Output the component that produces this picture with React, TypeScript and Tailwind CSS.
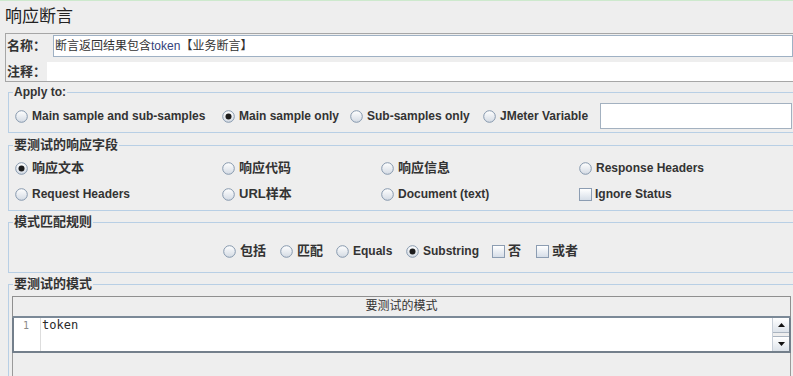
import React from 'react';

function Radio({ on }: { on?: boolean }) {
    return (
        <svg width="13" height="13" viewBox="0 0 13 13" className="shrink-0">
            <defs>
                <linearGradient id="radioFill" x1="0" y1="0" x2="0" y2="1">
                    <stop offset="0" stopColor="#ffffff" />
                    <stop offset="1" stopColor="#d3dae3" />
                </linearGradient>
            </defs>
            <circle cx="6.5" cy="6.5" r="5.8" fill="url(#radioFill)" stroke="#8598ad" strokeWidth="1" />
            {on && <circle cx="6.5" cy="6.5" r="3" fill="#1c1c1c" />}
        </svg>
    );
}

function Check() {
    return <span className="w-[13px] h-[13px] shrink-0 border border-[#8c9db2] bg-linear-to-b from-white to-[#d6dee8]" />;
}

function Option({ on, label, cjk, width }: { on?: boolean; label: string; cjk?: boolean; width?: string }) {
    return (
        <div className={`flex items-center gap-[4px] shrink-0 ${width ?? ''}`}>
            <Radio on={on} />
            <span className={cjk ? 'text-[13px] font-bold' : 'font-bold'}>{label}</span>
        </div>
    );
}

function Box({ label, cjk, width }: { label: string; cjk?: boolean; width?: string }) {
    return (
        <div className={`flex items-center gap-[3px] shrink-0 ${width ?? ''}`}>
            <Check />
            <span className={cjk ? 'text-[13px] font-bold' : 'font-bold'}>{label}</span>
        </div>
    );
}

export default function App() {
    const fieldset = "ml-[8px] border border-r-0 border-[#b8cfe5] min-w-0";
    const legend = "ml-[4px] px-[1px] leading-[14px] font-bold";

    return (
        <div className="w-[793px] h-[376px] overflow-hidden bg-[#eeeeee] border-t border-[#cde9cd] font-['Liberation_Sans','Noto_Sans_CJK_SC',sans-serif] text-[12px] text-[#333333]">
            <div className="h-[32px] flex items-center pl-[5px] text-[17px] text-[#222]">响应断言</div>

            {/* name / comment */}
            <div className="ml-[5px] border-t border-l border-b border-[#a6a6a6]">
                <div className="flex h-[23px] pt-[1px]">
                    <div className="w-[47px] pl-[1px] text-[13px] font-bold leading-[22px]">名称：</div>
                    <div className="flex-1 h-[22px] border border-[#9fb1c4] bg-white pl-[1px] leading-[20px] whitespace-nowrap">
                        断言返回结果包含<span className="text-[#34427a]">token</span>【业务断言】
                    </div>
                </div>
                <div className="h-[5px]" />
                <div className="flex h-[19px]">
                    <div className="w-[41px] pl-[1px] text-[13px] font-bold leading-[19px]">注释：</div>
                    <div className="flex-1 bg-white" />
                </div>
            </div>

            {/* Apply to */}
            <fieldset className={`mt-[3px] ${fieldset}`}>
                <legend className={legend}>Apply to:</legend>
                <div className="flex items-center h-[26px] mt-[4px] mb-[3px] pl-[6px]">
                    <Option label="Main sample and sub-samples" width="w-[207px]" />
                    <Option on label="Main sample only" width="w-[128px]" />
                    <Option label="Sub-samples only" width="w-[133px]" />
                    <Option label="JMeter Variable" width="w-[117px]" />
                    <div className="flex-1 h-[26px] mr-[1px] border border-[#a3b1c0] bg-white" />
                </div>
            </fieldset>

            {/* response field */}
            <fieldset className={`mt-[5px] ${fieldset}`}>
                <legend className={`${legend} text-[13px]`}>要测试的响应字段</legend>
                <div className="mt-[3px] mb-[3px] pl-[6px]">
                    <div className="flex items-center h-[26px]">
                        <Option on cjk label="响应文本" width="w-[207px]" />
                        <Option cjk label="响应代码" width="w-[159px]" />
                        <Option cjk label="响应信息" width="w-[198px]" />
                        <Option label="Response Headers" />
                    </div>
                    <div className="flex items-center h-[26px]">
                        <Option label="Request Headers" width="w-[207px]" />
                        <Option cjk label="URL样本" width="w-[159px]" />
                        <Option label="Document (text)" width="w-[198px]" />
                        <Box label="Ignore Status" />
                    </div>
                </div>
            </fieldset>

            {/* pattern matching rules */}
            <fieldset className={`mt-[4px] ${fieldset}`}>
                <legend className={`${legend} text-[13px]`}>模式匹配规则</legend>
                <div className="flex items-center h-[26px] mt-[9px] mb-[8px] pl-[214px]">
                    <Option cjk label="包括" width="w-[57px]" />
                    <Option cjk label="匹配" width="w-[56px]" />
                    <Option label="Equals" width="w-[70px]" />
                    <Option on label="Substring" width="w-[86px]" />
                    <Box cjk label="否" width="w-[44px]" />
                    <Box cjk label="或者" />
                </div>
            </fieldset>

            {/* patterns to test */}
            <fieldset className={`mt-[4px] ${fieldset}`}>
                <legend className={`${legend} text-[13px]`}>要测试的模式</legend>
                <div className="pt-[5px] pl-[3px] pr-[2px]">
                    <div className="h-[22px] border-t border-x border-[#8f8f8f] border-b-2 border-b-[#7b8997] text-center leading-[19px]">
                        要测试的模式
                    </div>
                    <div className="flex h-[35px] border-2 border-t-0 border-[#737f8b] bg-white">
                        <div className="w-[27px] pl-[9px] pt-[1px] border-r border-[#dddddd] font-['DejaVu_Sans_Mono',monospace] text-[10px] text-[#8a8a8a] leading-[14px]">1</div>
                        <div className="flex-1 pl-[1px] font-['DejaVu_Sans_Mono',monospace] text-[12px] leading-[15px] text-[#2a2a2a]">token</div>
                        <div className="w-[17px] flex flex-col justify-between bg-[#eeeeee] border-l border-[#c8cfd8]">
                            <div className="h-[15px] flex items-center justify-center bg-linear-to-b from-white to-[#dde3ea] border-b border-[#aab4c0]">
                                <svg width="7" height="4" viewBox="0 0 7 4"><path d="M0 4 L3.5 0 L7 4 Z" fill="#111" /></svg>
                            </div>
                            <div className="h-[15px] flex items-center justify-center bg-linear-to-b from-white to-[#dde3ea] border-t border-[#aab4c0]">
                                <svg width="7" height="4" viewBox="0 0 7 4"><path d="M0 0 L7 0 L3.5 4 Z" fill="#111" /></svg>
                            </div>
                        </div>
                    </div>
                    <div className="h-[40px] border-x border-[#9a9a9a]" />
                </div>
            </fieldset>
        </div>
    );
}
